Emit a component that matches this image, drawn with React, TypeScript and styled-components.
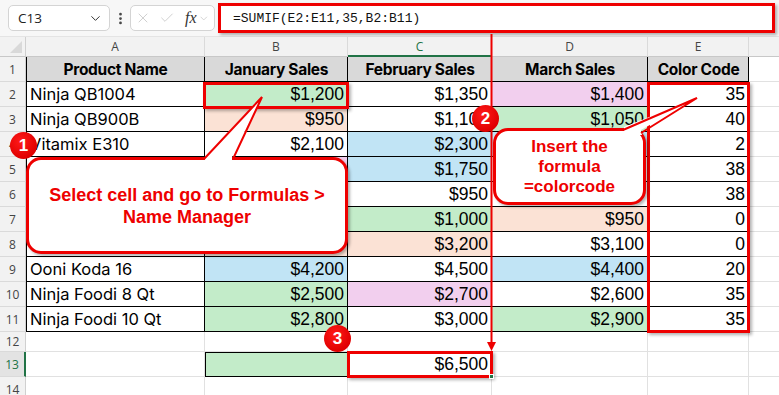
import React from "react";
import styled, { createGlobalStyle } from "styled-components";
import { X, Check, ChevronDown, EllipsisVertical } from "lucide-react";

const RED = "#ee0000";
const GRID = "#e1e1e1";
const EXCEL_GREEN = "#217346";

const fills = {
  green: "#c3ecc9",
  peach: "#fbe2d5",
  blue: "#c1e4f5",
  pink: "#f2cfee",
  head: "#d9d9d9",
};
type FillName = keyof typeof fills;

const GlobalStyle = createGlobalStyle`
  html, body { margin: 0; padding: 0; background: #fff; }
  body { font-family: "Liberation Sans", Arial, sans-serif; }
  * { box-sizing: border-box; }
`;

const Page = styled.div`
  position: relative;
  width: 779px;
  height: 395px;
  overflow: hidden;
  background: #fff;
`;

const Toolbar = styled.div`
  height: 37px;
  display: flex;
  align-items: center;
  padding: 0 4px 0 8px;
  background: #f7f7f7;
  border-bottom: 1px solid #e4e4e4;
`;

const NameBox = styled.div`
  width: 102px;
  height: 26px;
  display: flex;
  align-items: center;
  justify-content: space-between;
  padding: 0 6px 0 9px;
  background: #fff;
  border: 1px solid #d4d4d4;
  border-radius: 5px;
  font-family: "Open Sans", "Noto Sans", sans-serif;
  font-size: 13.5px;
  color: #222;
`;

const Dots = styled.div`
  width: 20px;
  display: flex;
  justify-content: center;
  color: #444;
`;

const FxBox = styled.div`
  width: 85px;
  height: 26px;
  display: flex;
  align-items: center;
  gap: 8px;
  padding: 0 4px 0 4px;
  background: #fff;
  border: 1px solid #d4d4d4;
  border-radius: 5px;
  color: #c4c4c4;
`;

const Fx = styled.span`
  font-family: "Liberation Serif", "Times New Roman", serif;
  font-style: italic;
  font-size: 16px;
  color: #333;
  margin-left: 2px;
  margin-right: -6px;
`;

const FormulaInput = styled.div`
  margin-left: 3px;
  flex: 1;
  height: 30px;
  display: flex;
  align-items: center;
  padding: 0 12px;
  background: #fff;
  border: 3px solid ${RED};
  box-shadow: 2px 2px 3px rgba(0, 0, 0, 0.3);
  font-family: "Liberation Mono", "Courier New", monospace;
  font-size: 13px;
  color: #111;
`;

const Sheet = styled.div`
  display: grid;
  grid-template-columns: 26px 179px 143px 144px 156px 101px 90px;
  grid-template-rows: 20px repeat(11, 25px) 20px 25px 25px;
`;

const Corner = styled.div`
  position: relative;
  background: #f2f2f2;
  border-right: 1px solid #d0d0d0;
  border-bottom: 1px solid #c8c8c8;
  &::after {
    content: "";
    position: absolute;
    right: 3px;
    bottom: 3px;
    width: 12px;
    height: 12px;
    background: #d9d9d9;
    clip-path: polygon(100% 0, 100% 100%, 0 100%);
  }
`;

const ColHead = styled.div<{ $active?: boolean }>`
  display: flex;
  align-items: center;
  justify-content: center;
  background: #f2f2f2;
  border-right: 1px solid #dadada;
  border-bottom: ${(p) => (p.$active ? `2px solid ${EXCEL_GREEN}` : "1px solid #c8c8c8")};
  font-family: "Open Sans", "Noto Sans", sans-serif;
  font-size: 12px;
  color: ${(p) => (p.$active ? EXCEL_GREEN : "#444")};
`;

const RowHead = styled.div<{ $active?: boolean }>`
  display: flex;
  align-items: center;
  justify-content: center;
  background: ${(p) => (p.$active ? "#e3e3e3" : "#f2f2f2")};
  border-right: ${(p) => (p.$active ? `2px solid ${EXCEL_GREEN}` : "1px solid #d0d0d0")};
  border-bottom: 1px solid #dadada;
  font-family: "Open Sans", "Noto Sans", sans-serif;
  font-size: 12px;
  color: ${(p) => (p.$active ? EXCEL_GREEN : "#444")};
`;

const Cell = styled.div<{
  $fill?: FillName;
  $align?: "left" | "right" | "center";
  $edge?: boolean;
  $left?: boolean;
  $top?: boolean;
  $bold?: boolean;
  $num?: boolean;
}>`
  display: flex;
  align-items: center;
  justify-content: ${(p) =>
    p.$align === "right" ? "flex-end" : p.$align === "center" ? "center" : "flex-start"};
  padding: 0 3px 0 4px;
  background: ${(p) => (p.$fill ? fills[p.$fill] : "#fff")};
  border-right: 1px solid ${(p) => (p.$edge ? "#000" : GRID)};
  border-bottom: 1px solid ${(p) => (p.$edge ? "#000" : GRID)};
  box-shadow: ${(p) =>
    [p.$left && "inset 1px 0 0 #000", p.$top && "inset 0 1px 0 #000"].filter(Boolean).join(", ") ||
    "none"};
  font-family: ${(p) =>
    p.$num ? `"Liberation Sans", Arial, sans-serif` : `Inter, "Noto Sans", sans-serif`};
  font-size: ${(p) => (p.$bold ? "15.5px" : p.$num ? "17.5px" : "16.5px")};
  font-weight: ${(p) => (p.$bold ? 700 : 400)};
  letter-spacing: ${(p) => (p.$bold ? "-0.3px" : "0")};
  color: #000;
  white-space: nowrap;
  overflow: hidden;
`;

/* annotation layer */
const Overlay = styled.div`
  position: absolute;
  inset: 0;
  pointer-events: none;
`;

const RedFrame = styled.div<{ $x: number; $y: number; $w: number; $h: number }>`
  position: absolute;
  left: ${(p) => p.$x}px;
  top: ${(p) => p.$y}px;
  width: ${(p) => p.$w}px;
  height: ${(p) => p.$h}px;
  border: 3px solid ${RED};
  box-shadow: 2px 2px 3px rgba(0, 0, 0, 0.3);
`;

const FillHandle = styled.div`
  position: absolute;
  left: 489px;
  top: 374px;
  width: 5px;
  height: 5px;
  background: ${EXCEL_GREEN};
  border: 1px solid #fff;
`;

const Callout = styled.div<{
  $x: number;
  $y: number;
  $w: number;
  $h: number;
  $size: number;
  $lh: number;
}>`
  position: absolute;
  left: ${(p) => p.$x}px;
  top: ${(p) => p.$y}px;
  width: ${(p) => p.$w}px;
  height: ${(p) => p.$h}px;
  display: flex;
  align-items: center;
  justify-content: center;
  text-align: center;
  background: #fff;
  border: 3px solid ${RED};
  border-radius: 15px;
  box-shadow: 2px 2px 3px rgba(0, 0, 0, 0.3);
  font-family: "Liberation Sans", Arial, sans-serif;
  font-weight: 700;
  font-size: ${(p) => p.$size}px;
  line-height: ${(p) => p.$lh}px;
  color: ${RED};
`;

const Tails = styled.svg`
  position: absolute;
  left: 0;
  top: 0;
`;

const Badge = styled.div<{ $x: number; $y: number }>`
  position: absolute;
  left: ${(p) => p.$x - 13}px;
  top: ${(p) => p.$y - 13}px;
  width: 27px;
  height: 27px;
  border-radius: 50%;
  background: radial-gradient(circle at 40% 35%, #ff1a1a, #e00000 70%);
  display: flex;
  align-items: center;
  justify-content: center;
  font-family: "Liberation Sans", Arial, sans-serif;
  font-weight: 700;
  font-size: 17px;
  color: #fff;
`;

type Val = [string, FillName?];
const rows: [string, Val, Val, Val, string][] = [
  ["Ninja QB1004", ["$1,200", "green"], ["$1,350"], ["$1,400", "pink"], "35"],
  ["Ninja QB900B", ["$950", "peach"], ["$1,100"], ["$1,050", "green"], "40"],
  ["Vitamix E310", ["$2,100"], ["$2,300", "blue"], ["$2,200", "blue"], "2"],
  ["Breville BBL620", ["$1,800", "pink"], ["$1,750", "blue"], ["$1,600"], "38"],
  ["Vitamix 5200", ["$1,500"], ["$950"], ["$1,200"], "38"],
  ["Ooni Karu 16", ["$2,400", "green"], ["$1,000", "green"], ["$950", "peach"], "0"],
  ["Ninja AF101", ["$3,000", "peach"], ["$3,200", "peach"], ["$3,100"], "0"],
  ["Ooni Koda 16", ["$4,200", "blue"], ["$4,500"], ["$4,400", "blue"], "20"],
  ["Ninja Foodi 8 Qt", ["$2,500", "green"], ["$2,700", "pink"], ["$2,600"], "35"],
  ["Ninja Foodi 10 Qt", ["$2,800", "green"], ["$3,000"], ["$2,900", "green"], "35"],
];

const headers = ["Product Name", "January Sales", "February Sales", "March Sales", "Color Code"];
const columns = ["A", "B", "C", "D", "E", "F"];

function SheetRow({ n }: { n: number }) {
  const head = <RowHead $active={n === 13}>{n}</RowHead>;
  if (n === 1) {
    return (
      <>
        {head}
        {headers.map((h, i) => (
          <Cell key={h} $fill="head" $edge $left={i === 0} $bold $align="center">
            {h}
          </Cell>
        ))}
        <Cell />
      </>
    );
  }
  if (n >= 2 && n <= 11) {
    const [name, b, c, d, e] = rows[n - 2];
    return (
      <>
        {head}
        <Cell $edge $left>
          {name}
        </Cell>
        {[b, c, d].map((v, i) => (
          <Cell key={i} $edge $fill={v[1]} $num $align="right">
            {v[0]}
          </Cell>
        ))}
        <Cell $edge $num $align="right">
          {e}
        </Cell>
        <Cell />
      </>
    );
  }
  if (n === 13) {
    return (
      <>
        {head}
        <Cell />
        <Cell $edge $left $top $fill="green" />
        <Cell $num $align="right">
          $6,500
        </Cell>
        <Cell />
        <Cell />
        <Cell />
      </>
    );
  }
  return (
    <>
      {head}
      {columns.map((c) => (
        <Cell key={c} />
      ))}
    </>
  );
}

export default function App() {
  return (
    <Page>
      <GlobalStyle />
      <Toolbar>
        <NameBox>
          C13
          <ChevronDown size={15} strokeWidth={1.6} color="#333" />
        </NameBox>
        <Dots>
          <EllipsisVertical size={15} strokeWidth={2.4} />
        </Dots>
        <FxBox>
          <X size={18} strokeWidth={1.2} />
          <Check size={18} strokeWidth={1.2} />
          <Fx>fx</Fx>
          <ChevronDown size={13} strokeWidth={1.5} />
        </FxBox>
        <FormulaInput>=SUMIF(E2:E11,35,B2:B11)</FormulaInput>
      </Toolbar>

      <Sheet>
        <Corner />
        {columns.map((c) => (
          <ColHead key={c} $active={c === "C"}>
            {c === "F" ? "" : c}
          </ColHead>
        ))}
        {Array.from({ length: 14 }, (_, i) => (
          <SheetRow key={i} n={i + 1} />
        ))}
      </Sheet>

      <Overlay>
        <RedFrame $x={203} $y={82} $w={146} $h={27} />
        <RedFrame $x={647} $y={82} $w={103} $h={251} />
        <RedFrame $x={347} $y={351} $w={146} $h={27} />
        <FillHandle />

        <Callout $x={26} $y={157} $w={322} $h={97} $size={18} $lh={22}>
          Select cell and go to Formulas &gt;
          <br />
          Name Manager
        </Callout>
        <Callout $x={493} $y={128} $w={153} $h={77} $size={17} $lh={20}>
          Insert the
          <br />
          formula
          <br />
          =colorcode
        </Callout>

        <Tails width={779} height={395} viewBox="0 0 779 395">
          <polygon points="205,161 205,157 262,97 232,157 232,161" fill="#fff" />
          <polyline points="204,159 262,97 233,159" fill="none" stroke={RED} strokeWidth={2} />
          <polygon points="624,132 624,127 697,98 641,130 642,135 634,135" fill="#fff" />
          <polyline points="623,130 697,98 641,133" fill="none" stroke={RED} strokeWidth={2} />
          <line x1={491.5} y1={34} x2={491.5} y2={343} stroke={RED} strokeWidth={2} />
          <polygon points="487,342 496,342 491.5,351" fill={RED} />
        </Tails>

        <Badge $x={23} $y={145}>1</Badge>
        <Badge $x={485} $y={118}>2</Badge>
        <Badge $x={337} $y={338}>3</Badge>
      </Overlay>
    </Page>
  );
}
